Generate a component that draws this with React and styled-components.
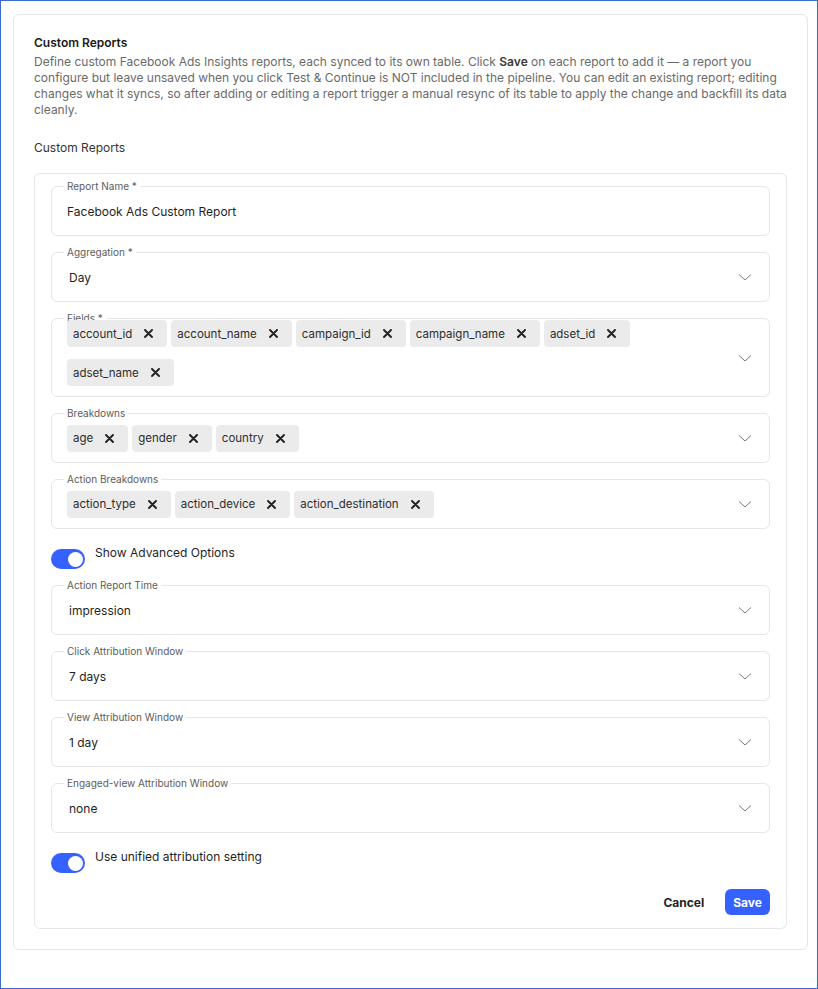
import React, { useState } from 'react'
import styled, { createGlobalStyle } from 'styled-components'

const GlobalStyle = createGlobalStyle`
  * { box-sizing: border-box; }
  body {
    margin: 0;
    background: #fff;
    font-family: Inter, "Noto Sans", "Liberation Sans", sans-serif;
    color: #1f1f1f;
  }
`

const Frame = styled.div`
  height: 989px;
  border: 1px solid #3a6bd1;
  padding: 13px 9px 13px 12px;
`

const Card = styled.div`
  border: 1px solid #e6e6e8;
  border-radius: 6px;
  padding: 20px 20px 20px 20px;
`

const Title = styled.div`
  font-size: 12px;
  line-height: 16px;
  font-weight: 600;
  color: #1a1a1a;
`

const Description = styled.p`
  margin: 3px 0 0;
  font-size: 12px;
  line-height: 16px;
  color: #6a6a6a;

  b {
    font-weight: 600;
    color: #3a3a3a;
  }
`

const SectionLabel = styled.div`
  margin-top: 22px;
  font-size: 12px;
  line-height: 16px;
  color: #333;
`

const ReportCard = styled.div`
  margin-top: 17px;
  border: 1px solid #e6e6e8;
  border-radius: 6px;
  padding: 6px 16px 13px;
  display: flex;
  flex-direction: column;
  gap: 10px;
`

const FieldBox = styled.fieldset`
  margin: 0;
  min-width: 0;
  border: 1px solid #e6e6e8;
  border-radius: 6px;
  padding: 0 15px;
`

const Legend = styled.legend`
  margin-left: -3px;
  padding: 0 3px;
  font-size: 10px;
  line-height: 12px;
  color: #5c5c5c;
`

const FieldRow = styled.div`
  display: flex;
  align-items: center;
  min-height: 43px;
  padding-bottom: ${p => (p.$multi ? '0' : '5px')};
  margin-top: ${p => (p.$multi ? '-4px' : '0')};
`

const Value = styled.div`
  flex: 1;
  font-size: 12px;
  padding-left: ${p => (p.$indent ? '2px' : '0')};
  color: #1f1f1f;
`

const Chips = styled.div`
  flex: 1;
  display: flex;
  flex-wrap: wrap;
  gap: 12px 4px;
  padding-bottom: ${p => (p.$multi ? '10px' : '0')};
`

const Chip = styled.span`
  display: inline-flex;
  align-items: center;
  gap: 12px;
  height: 27px;
  padding: 0 14px 0 6px;
  border-radius: 4px;
  background: #ebebeb;
  font-size: 11.5px;
  color: #2e2e2e;
`

const Chevron = styled.svg`
  flex: none;
  width: 14px;
  height: 14px;
  margin-right: 2px;
`

const ToggleRow = styled.div`
  display: flex;
  align-items: flex-start;
  gap: 10px;
  padding-top: 6px;
`

const Track = styled.button`
  flex: none;
  margin-top: 4px;
  width: 34px;
  height: 20px;
  border: none;
  border-radius: 10px;
  padding: 0 2px;
  background: ${p => (p.$on ? '#3461ff' : '#c9c9cf')};
  display: flex;
  align-items: center;
  justify-content: ${p => (p.$on ? 'flex-end' : 'flex-start')};
  cursor: pointer;
`

const Knob = styled.span`
  width: 15px;
  height: 15px;
  border-radius: 50%;
  background: #fff;
`

const ToggleLabel = styled.span`
  font-size: 12px;
  line-height: 16px;
  color: #1f1f1f;
`

const Actions = styled.div`
  display: flex;
  justify-content: flex-end;
  align-items: center;
  gap: 11px;
  padding-top: 6px;
`

const Button = styled.button`
  height: 26px;
  border: none;
  border-radius: 6px;
  padding: 0 ${p => (p.$primary ? '8px' : '10px')};
  font-family: inherit;
  font-size: 12px;
  font-weight: 700;
  background: ${p => (p.$primary ? '#3461ff' : 'transparent')};
  color: ${p => (p.$primary ? '#fff' : '#222')};
  cursor: pointer;
`

function ChevronDown() {
  return (
    <Chevron viewBox="0 0 14 14" fill="none">
      <path d="M1 4.5 L7 10 L13 4.5" stroke="#7a7a7a" strokeWidth="1" />
    </Chevron>
  )
}

function CloseIcon() {
  return (
    <svg width="9" height="9" viewBox="0 0 9 9">
      <path d="M1 1 L8 8 M8 1 L1 8" stroke="#222" strokeWidth="1.9" strokeLinecap="round" />
    </svg>
  )
}

function Field({ label, value, chips, multi, select }) {
  return (
    <FieldBox>
      <Legend>{label}</Legend>
      <FieldRow $multi={multi}>
        {chips ? (
          <Chips $multi={multi}>
            {chips.map(c => (
              <Chip key={c}>
                {c}
                <CloseIcon />
              </Chip>
            ))}
          </Chips>
        ) : (
          <Value $indent={select}>{value}</Value>
        )}
        {select && <ChevronDown />}
      </FieldRow>
    </FieldBox>
  )
}

function Toggle({ label, defaultOn }) {
  const [on, setOn] = useState(defaultOn)
  return (
    <ToggleRow>
      <Track $on={on} onClick={() => setOn(!on)}>
        <Knob />
      </Track>
      <ToggleLabel>{label}</ToggleLabel>
    </ToggleRow>
  )
}

export default function App() {
  return (
    <Frame>
      <GlobalStyle />
      <Card>
        <Title>Custom Reports</Title>
        <Description>
          Define custom Facebook Ads Insights reports, each synced to its own table. Click <b>Save</b> on each
          report to add it — a report you configure but leave unsaved when you click Test &amp; Continue is NOT
          included in the pipeline. You can edit an existing report; editing changes what it syncs, so after adding
          or editing a report trigger a manual resync of its table to apply the change and backfill its data
          cleanly.
        </Description>
        <SectionLabel>Custom Reports</SectionLabel>
        <ReportCard>
          <Field label="Report Name *" value="Facebook Ads Custom Report" />
          <Field label="Aggregation *" value="Day" select />
          <Field
            label="Fields *"
            select
            multi
            chips={['account_id', 'account_name', 'campaign_id', 'campaign_name', 'adset_id', 'adset_name']}
          />
          <Field label="Breakdowns" select chips={['age', 'gender', 'country']} />
          <Field label="Action Breakdowns" select chips={['action_type', 'action_device', 'action_destination']} />
          <Toggle label="Show Advanced Options" defaultOn />
          <Field label="Action Report Time" value="impression" select />
          <Field label="Click Attribution Window" value="7 days" select />
          <Field label="View Attribution Window" value="1 day" select />
          <Field label="Engaged-view Attribution Window" value="none" select />
          <Toggle label="Use unified attribution setting" defaultOn />
          <Actions>
            <Button>Cancel</Button>
            <Button $primary>Save</Button>
          </Actions>
        </ReportCard>
      </Card>
    </Frame>
  )
}
